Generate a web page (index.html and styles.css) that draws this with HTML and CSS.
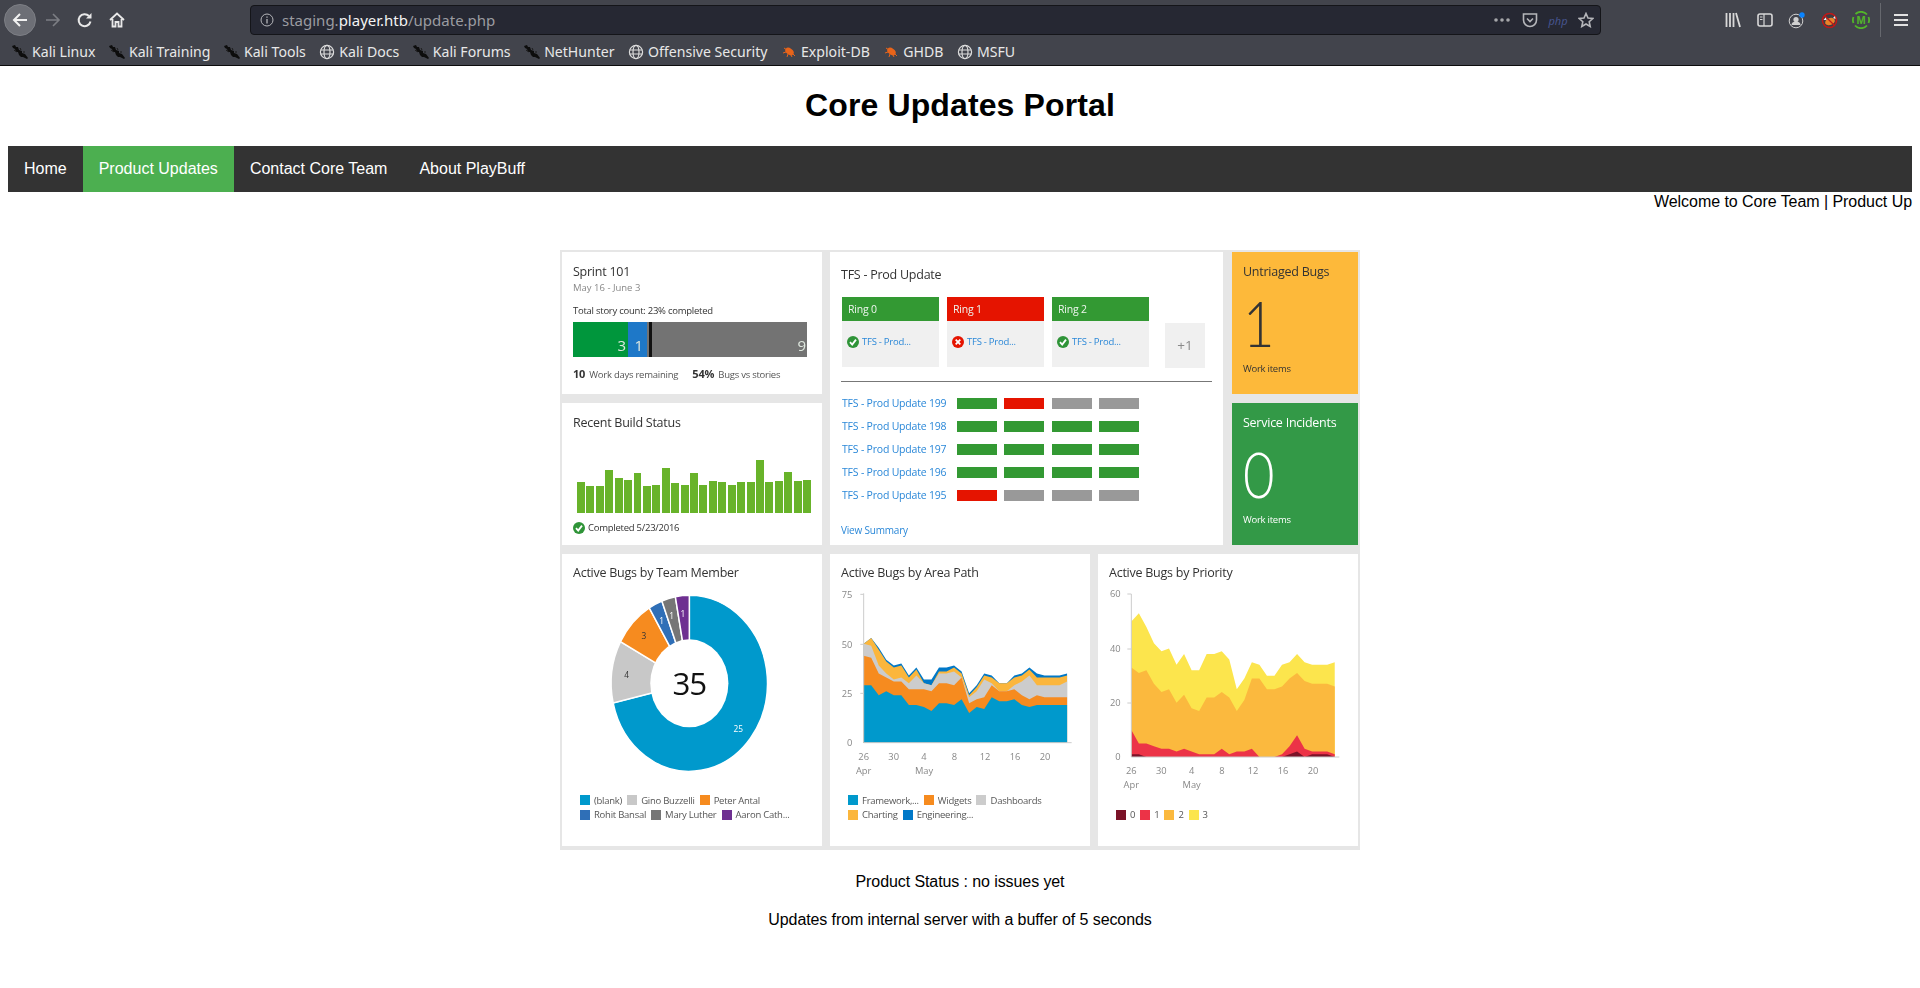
FILE: index.html
```html
<!DOCTYPE html>
<html lang="en">
<head>
    <meta charset="UTF-8">
    <title>Core Updates Portal</title>
    <link rel="stylesheet" href="styles.css">
</head>
<body>
    <svg class="defs" width="0" height="0">
        <symbol id="dragon" viewBox="0 0 16 16"><path d="M0 2 3 1 4 3 6 3 7 6 10 7 10 9 13 10 16 14 15 15 11 13 9 13 7 11 6 8 4 8 3 5 1 4Z" fill="#0d0d0d"/><path d="M2 6 5 8M8 4 9 6M11 8 13 8" stroke="#1a1a1a" fill="none"/></symbol>
        <symbol id="globe" viewBox="0 0 16 16"><g fill="none" stroke="#dcdcdc" stroke-width="1.2"><circle cx="8" cy="8" r="6.6"/><ellipse cx="8" cy="8" rx="3" ry="6.6"/><path d="M1.6 6h12.8M1.6 10h12.8"/></g></symbol>
        <symbol id="bug" viewBox="0 0 16 16"><ellipse cx="8.5" cy="7.5" rx="4.6" ry="3.2" transform="rotate(35 8.5 7.5)" fill="#e8641a"/><path d="M3 4 6 6M2 9 5 8M6 13 7 10M11 13 10 11M14 12 12 10" stroke="#e8641a" fill="none"/></symbol>
        <symbol id="ok" viewBox="0 0 12 12"><circle cx="6" cy="6" r="6" fill="#2f9438"/><path d="M3 6.2 5.2 8.6 9 3.6" stroke="#fff" stroke-width="1.8" fill="none"/></symbol>
        <symbol id="fail" viewBox="0 0 12 12"><circle cx="6" cy="6" r="6" fill="#e51400"/><path d="M3.7 3.7 8.3 8.3M8.3 3.7 3.7 8.3" stroke="#fff" stroke-width="1.8" fill="none"/></symbol>
    </svg>

    <header class="browser">
        <div class="toolbar">
            <button class="tool back"><svg width="18" height="18" viewBox="0 0 18 18"><path d="M16 9H3M9 3 3 9l6 6" fill="none" stroke="#f2f2f2" stroke-width="2"/></svg></button>
            <button class="tool"><svg width="18" height="18" viewBox="0 0 18 18"><path d="M2 9h13M9 3l6 6-6 6" fill="none" stroke="#7c7e84" stroke-width="1.6"/></svg></button>
            <button class="tool"><svg width="16" height="16" viewBox="0 0 16 16"><path d="M13.5 9.5A6 6 0 1 1 12 4" fill="none" stroke="#e8e8e8" stroke-width="2"/><path d="M14.5 1v5.5H9Z" fill="#e8e8e8"/></svg></button>
            <button class="tool"><svg width="16" height="16" viewBox="0 0 16 16"><path d="M1 8 8 1.5 15 8M3.5 7v7.5h3V10h3v4.5h3V7" fill="none" stroke="#e8e8e8" stroke-width="1.8"/></svg></button>
            <div class="urlbar">
                <svg class="info" width="14" height="14" viewBox="0 0 14 14"><circle cx="7" cy="7" r="6" fill="none" stroke="#b5b6ba"/><path d="M7 6v4.5M7 3.4v1.4" stroke="#b5b6ba" stroke-width="1.3"/></svg>
                <span class="url">staging.<b>player.htb</b>/update.php</span>
                <div class="url-actions">
                    <span class="action"><svg width="16" height="4" viewBox="0 0 16 4" fill="#a5a6aa"><circle cx="2" cy="2" r="1.8"/><circle cx="8" cy="2" r="1.8"/><circle cx="14" cy="2" r="1.8"/></svg></span>
                    <span class="action"><svg width="16" height="16" viewBox="0 0 16 16"><path d="M1.5 2h13v6a6.5 6.5 0 0 1-13 0Z" fill="none" stroke="#b5b6ba" stroke-width="1.6"/><path d="M5 6.5 8 9.5l3-3" fill="none" stroke="#b5b6ba" stroke-width="1.6"/></svg></span>
                    <span class="action php">php</span>
                    <span class="action"><svg width="16" height="16" viewBox="0 0 16 16"><path d="M8 1.5 10 6l4.8.5-3.6 3.2 1 4.8L8 12l-4.2 2.5 1-4.8L1.2 6.5 6 6Z" fill="none" stroke="#b5b6ba" stroke-width="1.6"/></svg></span>
                </div>
            </div>
            <div class="tools-right">
                <button class="tool"><svg width="16" height="16" viewBox="0 0 16 16"><path d="M1.5 1v14M5 1v14M8.5 1v14M11 1l4 14" fill="none" stroke="#d8d8d8" stroke-width="1.8"/></svg></button>
                <button class="tool"><svg width="16" height="14" viewBox="0 0 16 14"><rect x="1" y="1" width="14" height="12" rx="2" fill="none" stroke="#d8d8d8" stroke-width="1.6"/><path d="M7 1v12M3 4h2.5M3 6.5h2.5" stroke="#d8d8d8" stroke-width="1.2"/></svg></button>
                <button class="tool"><svg width="18" height="18" viewBox="0 0 18 18"><circle cx="8" cy="10" r="6.8" fill="none" stroke="#d0d0d0"/><circle cx="8" cy="8.5" r="2.6" fill="#d0d0d0"/><path d="M3.5 14a4.5 3.5 0 0 1 9 0" fill="#d0d0d0"/><circle cx="14" cy="4" r="2.7" fill="#0a84ff"/></svg></button>
                <button class="tool"><svg width="17" height="17" viewBox="0 0 17 17"><circle cx="8.5" cy="8.5" r="7" fill="#3c3d44" stroke="#c01818" stroke-width="1.6"/><ellipse cx="9" cy="9.5" rx="5" ry="3.5" transform="rotate(-20 9 9.5)" fill="#e8832a"/><path d="M2.5 8 5 5 5.500 8ZM14 4 12 6 14.500 7Z" fill="#f0f0f0"/><path d="M3.5 3.5 13.5 13.500" stroke="#c01818" stroke-width="1.3"/></svg></button>
                <button class="tool"><svg width="18" height="18" viewBox="0 0 18 18"><path d="M15 3.5A8 8 0 0 0 3.5 3M3 14.500A8 8 0 0 0 15 14.500M1.5 6a8 8 0 0 0 0 6M16.500 6a8 8 0 0 1 0 6" fill="none" stroke="#52b52a" stroke-width="1.8"/><text class="m-badge" x="9" y="13" text-anchor="middle">M</text></svg></button>
                <span class="tool-sep"></span>
                <button class="tool menu"><svg width="14" height="12" viewBox="0 0 14 12" fill="#e2e2e2"><rect width="14" height="2"/><rect y="5" width="14" height="2"/><rect y="10" width="14" height="2"/></svg></button>
            </div>
        </div>
        <div class="bookmarks">
            <a><svg><use href="#dragon"/></svg>Kali Linux</a>
            <a><svg><use href="#dragon"/></svg>Kali Training</a>
            <a><svg><use href="#dragon"/></svg>Kali Tools</a>
            <a><svg><use href="#globe"/></svg>Kali Docs</a>
            <a><svg><use href="#dragon"/></svg>Kali Forums</a>
            <a><svg><use href="#dragon"/></svg>NetHunter</a>
            <a><svg><use href="#globe"/></svg>Offensive Security</a>
            <a><svg><use href="#bug"/></svg>Exploit-DB</a>
            <a><svg><use href="#bug"/></svg>GHDB</a>
            <a><svg><use href="#globe"/></svg>MSFU</a>
        </div>
    </header>

    <main class="page">
        <h1>Core Updates Portal</h1>

        <ul class="nav">
            <li><a href="#">Home</a></li>
            <li><a href="#" class="active">Product Updates</a></li>
            <li><a href="#">Contact Core Team</a></li>
            <li><a href="#">About PlayBuff</a></li>
        </ul>

        <div class="ticker">Welcome to Core Team | Product Up</div>

        <div class="dashboard">
            <div class="row top-row">
                <div class="col left-col">
                    <section class="tile half">
                        <h3>Sprint 101</h3>
                        <div class="date">May 16 - June 3</div>
                        <div class="story">Total story count: 23% completed</div>
                        <div class="burn">
                            <span class="burn-done">3</span>
                            <span class="burn-active">1</span>
                            <span class="burn-mark"></span>
                            <span class="burn-rest">9</span>
                        </div>
                        <div class="stats"><b>10</b> <span>Work days remaining</span> <b class="stat-two">54%</b> <span>Bugs vs stories</span></div>
                    </section>
                    <section class="tile half">
                        <h3>Recent Build Status</h3>
                        <div class="bars">
                            <i style="height:31px"></i><i style="height:27px"></i><i style="height:27px"></i><i style="height:43px"></i><i style="height:35px"></i>
                            <i style="height:33px"></i><i style="height:40px"></i><i style="height:27px"></i><i style="height:28px"></i><i style="height:45px"></i>
                            <i style="height:30px"></i><i style="height:28px"></i><i style="height:40px"></i><i style="height:28px"></i><i style="height:32px"></i>
                            <i style="height:31px"></i><i style="height:28px"></i><i style="height:31px"></i><i style="height:31px"></i><i style="height:53px"></i>
                            <i style="height:31px"></i><i style="height:32px"></i><i style="height:41px"></i><i style="height:32px"></i><i style="height:33px"></i>
                        </div>
                        <div class="build-status"><svg width="12" height="12"><use href="#ok"/></svg>Completed 5/23/2016</div>
                    </section>
                </div>

                <section class="tile tfs">
                    <h3>TFS - Prod Update</h3>
                    <div class="rings">
                        <div class="ring">
                            <div class="ring-head pass">Ring 0</div>
                            <div class="ring-body"><svg width="12" height="12"><use href="#ok"/></svg><a>TFS - Prod...</a></div>
                        </div>
                        <div class="ring">
                            <div class="ring-head bad">Ring 1</div>
                            <div class="ring-body"><svg width="12" height="12"><use href="#fail"/></svg><a>TFS - Prod...</a></div>
                        </div>
                        <div class="ring">
                            <div class="ring-head pass">Ring 2</div>
                            <div class="ring-body"><svg width="12" height="12"><use href="#ok"/></svg><a>TFS - Prod...</a></div>
                        </div>
                        <div class="more">+1</div>
                    </div>
                    <hr class="divider">
                    <div class="release"><a>TFS - Prod Update 199</a><i class="pass"></i><i class="bad"></i><i class="idle"></i><i class="idle"></i></div>
                    <div class="release"><a>TFS - Prod Update 198</a><i class="pass"></i><i class="pass"></i><i class="pass"></i><i class="pass"></i></div>
                    <div class="release"><a>TFS - Prod Update 197</a><i class="pass"></i><i class="pass"></i><i class="pass"></i><i class="pass"></i></div>
                    <div class="release"><a>TFS - Prod Update 196</a><i class="pass"></i><i class="pass"></i><i class="pass"></i><i class="pass"></i></div>
                    <div class="release"><a>TFS - Prod Update 195</a><i class="bad"></i><i class="idle"></i><i class="idle"></i><i class="idle"></i></div>
                    <a class="summary">View Summary</a>
                </section>

                <div class="col right-col">
                    <section class="tile half count amber">
                        <h3>Untriaged Bugs</h3>
                        <div class="big">1</div>
                        <div class="count-label">Work items</div>
                    </section>
                    <section class="tile half count green">
                        <h3>Service Incidents</h3>
                        <div class="big">0</div>
                        <div class="count-label">Work items</div>
                    </section>
                </div>
            </div>

            <div class="row bottom-row">
                <section class="tile chart-tile">
                    <h3>Active Bugs by Team Member</h3>
                    <svg class="chart" viewBox="21 120 780 570">
                        <g transform="translate(403 400) scale(234.5 264)" stroke="#fff" stroke-width="1.5">
                            <path vector-effect="non-scaling-stroke" fill="#0099cc" d="M0 0 0-1A1 1 0 1 1-.9749.2225Z"/>
                            <path vector-effect="non-scaling-stroke" fill="#c8c8c8" d="M0 0-.9749.2225A1 1 0 0 1-.8807-.4738Z"/>
                            <path vector-effect="non-scaling-stroke" fill="#f68b1f" d="M0 0-.8807-.4738A1 1 0 0 1-.513-.8584Z"/>
                            <path vector-effect="non-scaling-stroke" fill="#2f6fb7" d="M0 0-.513-.8584A1 1 0 0 1-.3513-.9363Z"/>
                            <path vector-effect="non-scaling-stroke" fill="#767676" d="M0 0-.3513-.9363A1 1 0 0 1-.1786-.9839Z"/>
                            <path vector-effect="non-scaling-stroke" fill="#6e2f91" d="M0 0-.1786-.9839A1 1 0 0 1 0-1Z"/>
                            <circle r=".5" fill="#fff" stroke="none"/>
                        </g>
                        <text class="donut-total" x="403" y="436" text-anchor="middle">35</text>
                        <text class="donut-label light" x="550" y="547" text-anchor="middle">25</text>
                        <text class="donut-label" x="215" y="384" text-anchor="middle">4</text>
                        <text class="donut-label" x="267" y="267" text-anchor="middle">3</text>
                        <text class="donut-label light" x="320" y="222" text-anchor="middle">1</text>
                        <text class="donut-label light" x="350" y="207" text-anchor="middle">1</text>
                        <text class="donut-label light" x="384" y="201" text-anchor="middle">1</text>
                    </svg>
                    <div class="legend">
                        <div class="legend-row">
                            <span><i style="background:#0099cc"></i>(blank)</span>
                            <span><i style="background:#c8c8c8"></i>Gino Buzzelli</span>
                            <span><i style="background:#f68b1f"></i>Peter Antal</span>
                        </div>
                        <div class="legend-row">
                            <span><i style="background:#2f6fb7"></i>Rohit Bansal</span>
                            <span><i style="background:#767676"></i>Mary Luther</span>
                            <span><i style="background:#6e2f91"></i>Aaron Cath...</span>
                        </div>
                    </div>
                </section>

                <section class="tile chart-tile">
                    <h3>Active Bugs by Area Path</h3>
                    <svg class="chart" viewBox="15 120 780 570">
                        <g transform="translate(116 578) scale(22.6 -5.93)">
                            <polygon fill="#0078c8" points="0,0 0,50 1,53 2,48 3,42 4,39 5,40 6,34 7,38 8,32 9,32 10,38 11,38 12,39 13,36 14,25 15,29 16,35 17,34 18,30 19,30 20,34 21,35 22,38 23,35 24,34 25,34 26,34 27,35 27,0"/>
                            <polygon fill="#fbb63c" points="0,0 0,50 1,53 2,47 3,41 4,38 5,39 6,33 7,37 8,30 9,29 10,36 11,36 12,38 13,35 14,24 15,28 16,34 17,33 18,30 19,30 20,33 21,34 22,37 23,33 24,33 25,33 26,33 27,34 27,0"/>
                            <polygon fill="#cccccc" points="0,0 0,50 1,49 2,39 3,35 4,32 5,33 6,30 7,34 8,30 9,29 10,35 11,35 12,36 13,33 14,23 15,26 16,32 17,30 18,26 19,26 20,29 21,31 22,34 23,29 24,29 25,29 26,29 27,31 27,0"/>
                            <polygon fill="#f68b1f" points="0,0 0,44 1,43 2,35 3,33 4,31 5,31 6,27 7,27 8,27 9,26 10,30 11,30 12,29 13,33 14,20 15,22 16,23 17,29 18,26 19,26 20,27 21,24 22,22 23,24 24,23 25,23 26,23 27,23 27,0"/>
                            <polygon fill="#0099cc" points="0,0 0,29 1,29 2,24 3,26 4,24 5,24 6,19 7,19 8,18 9,16 10,20 11,20 12,19 13,22 14,15 15,18 16,17 17,23 18,21 19,21 20,22 21,19 22,18 23,19 24,19 25,19 26,19 27,19 27,0"/>
                        </g>
                        <path class="axis" d="M116 130V578H740M106 133H116M106 283H116M106 430H116"/>
                        <g class="axis-label" text-anchor="end">
                            <text x="82" y="143">75</text><text x="82" y="293">50</text><text x="82" y="440">25</text><text x="82" y="588">0</text>
                        </g>
                        <g class="axis-label" text-anchor="middle">
                            <text x="116" y="630">26</text><text x="206" y="630">30</text><text x="297" y="630">4</text><text x="388" y="630">8</text><text x="480" y="630">12</text><text x="570" y="630">16</text><text x="660" y="630">20</text>
                            <text x="116" y="672">Apr</text><text x="297" y="672">May</text>
                        </g>
                    </svg>
                    <div class="legend area-legend">
                        <div class="legend-row">
                            <span><i style="background:#0099cc"></i>Framework,...</span>
                            <span><i style="background:#f68b1f"></i>Widgets</span>
                            <span><i style="background:#cccccc"></i>Dashboards</span>
                        </div>
                        <div class="legend-row">
                            <span><i style="background:#fbb63c"></i>Charting</span>
                            <span><i style="background:#0078c8"></i>Engineering...</span>
                        </div>
                    </div>
                </section>

                <section class="tile chart-tile">
                    <h3>Active Bugs by Priority</h3>
                    <svg class="chart tall" viewBox="24 120 780 615">
                        <g transform="translate(124 621) scale(22.6 -8.13)">
                            <polygon fill="#fce54d" points="0,0 0,50 1,53 2,48 3,42 4,39 5,40 6,34 7,38 8,32 9,32 10,38 11,38 12,39 13,36 14,25 15,29 16,35 17,34 18,30 19,30 20,34 21,35 22,38 23,35 24,34 25,34 26,34 27,35 27,0"/>
                            <polygon fill="#fbb93e" points="0,0 0,33 1,31 2,32 3,27 4,24 5,25 6,20 7,23 8,18 9,17 10,22 11,22 12,24 13,22 14,17 15,21 16,29 17,29 18,25 19,25 20,26 21,29 22,31 23,28 24,27 25,27 26,27 27,26 27,0"/>
                            <polygon fill="#ec3347" points="0,0 0,10 1,5 2,5 3,4 4,3 5,3 6,2 7,3 8,2 9,1 10,1 11,1 12,3 13,1 14,2 15,2 16,3 17,0 18,0 19,0 20,1 21,4 22,8 23,3 24,2 25,2 26,2 27,1 27,0"/>
                            <polygon fill="#7b1328" points="0,0 0,1 1,1 2,0 20,0 21,1 22,2 23,0 24,1 25,1 26,1 27,0"/>
                        </g>
                        <path class="axis" d="M124 132V621H748M112 132H124M112 297H124M112 459H124"/>
                        <g class="axis-label" text-anchor="end">
                            <text x="92" y="142">60</text><text x="92" y="307">40</text><text x="92" y="469">20</text><text x="92" y="631">0</text>
                        </g>
                        <g class="axis-label" text-anchor="middle">
                            <text x="124" y="673">26</text><text x="214" y="673">30</text><text x="305" y="673">4</text><text x="396" y="673">8</text><text x="489" y="673">12</text><text x="579" y="673">16</text><text x="669" y="673">20</text>
                            <text x="124" y="713">Apr</text><text x="305" y="713">May</text>
                        </g>
                    </svg>
                    <div class="legend priority-legend">
                        <div class="legend-row">
                            <span><i style="background:#7b1328"></i>0</span>
                            <span><i style="background:#ec3347"></i>1</span>
                            <span><i style="background:#fbb93e"></i>2</span>
                            <span><i style="background:#fce54d"></i>3</span>
                        </div>
                    </div>
                </section>
            </div>
        </div>

        <p class="status first">Product Status : no issues yet</p>
        <p class="status">Updates from internal server with a buffer of 5 seconds</p>
    </main>
</body>
</html>
```

FILE: styles.css
```css
* {
    box-sizing: border-box;
}

body {
    margin: 0;
    background-color: #fff;
    color: #000;
    font-family: "Liberation Sans", Arial, sans-serif;
    font-size: 16px;
}

.defs {
    position: absolute;
}

/* Browser chrome */
.browser {
    background-color: #42444c;
    border-bottom: 1px solid #0c0c0d;
    height: 66px;
    font-family: "Noto Sans", sans-serif;
}

.toolbar {
    display: flex;
    align-items: center;
    height: 40px;
    padding-left: 4px;
}

.tool {
    display: flex;
    align-items: center;
    justify-content: center;
    width: 32px;
    height: 32px;
    padding: 0;
    border: none;
    border-radius: 50%;
    background: none;
}

.tool.back {
    margin-right: 1px;
    background-color: #6d6f76;
    border: 1px solid #7d7f85;
}

.urlbar {
    flex: 1;
    display: flex;
    align-items: center;
    height: 30px;
    margin: 0 116px 0 117px;
    padding-left: 9px;
    background-color: #262833;
    border: 1px solid #141519;
    border-radius: 4px;
    color: #9b9ca1;
    font-size: 15px;
}

.url {
    margin-left: 8px;
}

.url b {
    color: #f4f4f4;
    font-weight: normal;
}

.url-actions {
    display: flex;
    margin-left: auto;
}

.action {
    display: flex;
    align-items: center;
    justify-content: center;
    width: 28px;
    height: 28px;
}

.php {
    color: #47558f;
    font-size: 11px;
    font-style: italic;
}

.tools-right {
    display: flex;
    align-items: center;
    margin-right: 2px;
}

.tool-sep {
    width: 1px;
    height: 34px;
    margin: 0 3px;
    background-color: #66686e;
}

.tool.menu {
    width: 34px;
}

.m-badge {
    fill: #52b52a;
    font-family: "Liberation Sans", sans-serif;
    font-size: 11px;
    font-weight: bold;
}

.bookmarks {
    display: flex;
    align-items: center;
    gap: 13.5px;
    height: 25px;
    padding: 0 0 2px 12px;
    color: #e8e8e8;
    font-size: 14.1px;
}

.bookmarks a {
    display: flex;
    align-items: center;
    gap: 4px;
}

.bookmarks svg {
    width: 16px;
    height: 16px;
}

/* Page */
.page {
    padding: 0 8px;
}

h1 {
    margin: 21.44px 0;
    font-size: 32px;
    line-height: 37px;
    letter-spacing: 0.12px;
    text-align: center;
}

.nav {
    display: flex;
    margin: 0;
    padding: 0;
    list-style: none;
    background-color: #333;
}

.nav a {
    display: block;
    padding: 14px 16px;
    color: #fff;
    line-height: 18.4px;
    text-decoration: none;
}

.nav a.active {
    background-color: #4caf50;
}

.ticker {
    height: 18px;
    margin-top: 1px;
    line-height: 18px;
    letter-spacing: -0.05px;
    text-align: right;
}

.status {
    margin: 20px 0 0;
    line-height: 18px;
    letter-spacing: -0.09px;
    text-align: center;
}

.status.first {
    margin-top: 23px;
}

/* Dashboard picture */
.dashboard {
    width: 800px;
    margin: 38.7px auto 0;
    padding: 2px 2px 4px;
    background-color: #e6e6e6;
    color: #333;
    font-family: "Open Sans", sans-serif;
    font-size: 9.5px;
    filter: blur(0.5px);
}

.row {
    display: flex;
}

.top-row {
    height: 293px;
    margin-bottom: 9px;
}

.bottom-row {
    gap: 8px;
    height: 292px;
}

.col {
    display: flex;
    flex-direction: column;
    gap: 9px;
}

.left-col {
    width: 260px;
    margin-right: 8px;
}

.right-col {
    width: 126px;
    margin-left: 9px;
}

.tile {
    padding: 10px 11px;
    background-color: #fff;
}

.half {
    height: 142px;
}

.tile h3 {
    margin: 0;
    color: #333;
    font-size: 12.5px;
    font-weight: normal;
    line-height: 20px;
    letter-spacing: -0.25px;
}

.date {
    color: #888;
    line-height: 12px;
}

.story {
    margin-top: 10px;
    line-height: 14px;
    letter-spacing: -0.25px;
}

.burn {
    display: flex;
    width: 234px;
    height: 35px;
    margin-top: 4px;
    color: #dfe8df;
    font-size: 15px;
    line-height: 46px;
    text-align: right;
}

.burn-done {
    width: 55px;
    padding-right: 2px;
    background-color: #00963c;
}

.burn-active {
    width: 19px;
    padding-right: 4px;
    background-color: #1e78c8;
}

.burn-mark {
    width: 5px;
    border-left: 2px solid #737373;
    background-color: #111;
}

.burn-rest {
    flex: 1;
    padding-right: 1px;
    background-color: #737373;
}

.stats {
    margin-top: 10px;
    line-height: 14px;
    letter-spacing: -0.25px;
    color: #555;
}

.stats b {
    margin-right: 2px;
    color: #333;
    font-size: 11px;
}

.stats .stat-two {
    margin-left: 12px;
}

.bars {
    display: flex;
    align-items: flex-end;
    gap: 1.47px;
    height: 60px;
    margin: 20px 0 0 4px;
}

.bars i {
    width: 8px;
    background-color: #68b32a;
}

.build-status {
    display: flex;
    align-items: center;
    gap: 3px;
    margin-top: 8px;
    line-height: 14px;
    letter-spacing: -0.25px;
}

/* TFS tile */
.tfs {
    width: 393px;
    padding-top: 13px;
}

.rings {
    display: flex;
    gap: 8px;
    margin-top: 12px;
    padding-left: 1px;
}

.ring {
    width: 97px;
}

.ring-head {
    height: 24px;
    padding-left: 6px;
    color: #eef5ee;
    font-size: 10.5px;
    line-height: 25px;
    letter-spacing: -0.2px;
}

.pass {
    background-color: #339933;
}

.bad {
    background-color: #e51400;
}

.idle {
    background-color: #999;
}

.ring-body {
    display: flex;
    align-items: center;
    gap: 3px;
    height: 46px;
    padding: 0 0 4px 5px;
    background-color: #f0f0f0;
}

.tile a {
    color: #2b88d8;
    letter-spacing: -0.25px;
}

.more {
    align-self: flex-end;
    width: 40px;
    height: 45px;
    margin: 0 0 -1px 8px;
    background-color: #f0f0f0;
    color: #8a8a8a;
    font-size: 13.5px;
    line-height: 45px;
    text-align: center;
}

.divider {
    height: 1px;
    margin: 14px 0 10px;
    border: none;
    background-color: #777;
}

.release {
    display: flex;
    align-items: center;
    height: 23px;
    padding-left: 1px;
}

.release a {
    width: 115px;
    font-size: 10.5px;
    letter-spacing: -0.2px;
}

.release i {
    width: 40px;
    height: 11px;
    margin-right: 7.3px;
}

.tile .summary {
    display: block;
    margin-top: 16px;
    font-size: 10px;
    line-height: 14px;
    letter-spacing: -0.2px;
}

/* Count tiles */
.count {
    width: 126px;
}

.amber {
    background-color: #fdb93a;
    color: #333;
}

.green {
    background-color: #339947;
    color: #fff;
}

.tile.green h3 {
    color: #fff;
}

.big {
    margin: 9px 0 7px;
    font-family: "Lato", sans-serif;
    font-size: 64px;
    font-weight: 300;
    line-height: 64px;
    transform: scaleX(0.85);
    transform-origin: left;
}

.count-label {
    line-height: 14px;
    letter-spacing: -0.25px;
}

/* Chart tiles */
.chart-tile {
    width: 260px;
    padding-top: 9px;
}

.chart {
    display: block;
    width: 260px;
    height: 190px;
    margin: 7px -11px 0;
}

.chart.tall {
    height: 205px;
}

.axis {
    fill: none;
    stroke: #ccc;
    stroke-width: 3;
}

.axis-label text {
    fill: #888;
}

.axis-label {
    font-size: 28px;
}

.donut-total {
    font-size: 94px;
    fill: #111;
    letter-spacing: -3px;
}

.donut-label {
    font-size: 25px;
    fill: #333;
}

.donut-label.light {
    fill: #fff;
}

.legend {
    margin: 13px 0 0 7px;
    color: #555;
    letter-spacing: -0.25px;
}

.legend-row {
    display: flex;
    gap: 5px;
    height: 14.5px;
    line-height: 15px;
}

.legend-row span {
    display: flex;
    align-items: center;
    gap: 4px;
}

.legend-row i {
    width: 10px;
    height: 10px;
}

.priority-legend {
    margin-top: 12.5px;
}
```
